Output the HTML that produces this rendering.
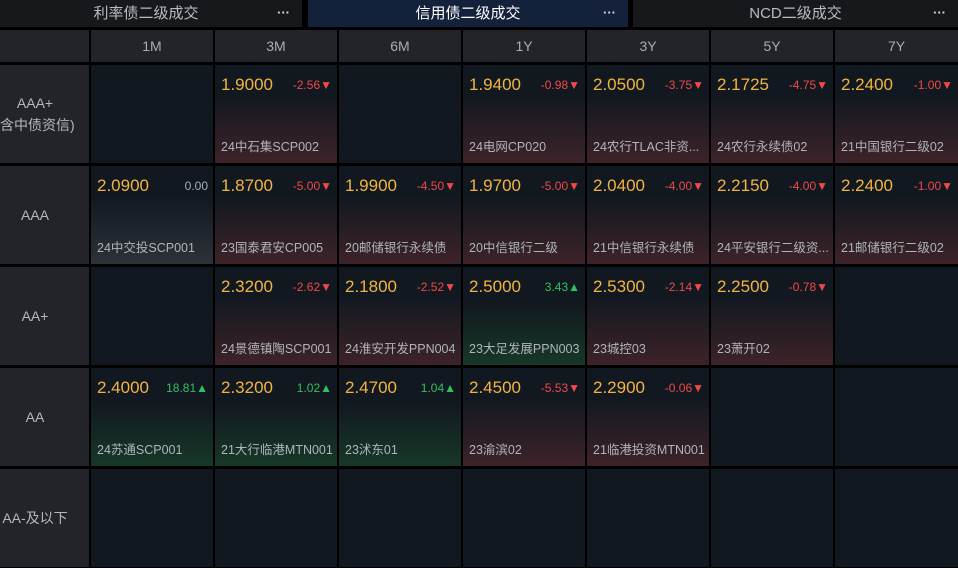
<!DOCTYPE html>
<html><head><meta charset="utf-8"><style>
*{margin:0;padding:0;box-sizing:border-box}
body{width:958px;height:568px;background:#000;overflow:hidden;font-family:"Liberation Sans","Noto Sans CJK SC",sans-serif;position:relative}
.tab{position:absolute;top:0;height:27px;background:#17181b;color:#b8bcc4;font-size:15px;line-height:27px;text-align:center}
.tab .d{position:absolute;right:12px;top:-1px;font-size:13px;letter-spacing:0;color:#ddd;font-weight:bold}
.grid{position:absolute;top:30px;left:0;width:958px;display:grid;grid-template-columns:89px repeat(6,122px) 1fr;grid-template-rows:32px repeat(5,98px);column-gap:2px;row-gap:3px}
.h{background:#232429;color:#a8acb4;font-size:14px;display:flex;align-items:center;justify-content:center}
.l{background:#232429;color:#b4b8c0;font-size:14px;position:relative;overflow:hidden}
.l span{position:absolute;left:-15px;width:100px;top:50%;transform:translateY(-50%);text-align:center;line-height:22px;white-space:nowrap}
.c{background:#121820;position:relative}
.r{background:linear-gradient(#121820 30%,#3d2329)}
.g{background:linear-gradient(#121820 35%,#173828)}
.n{background:linear-gradient(#121820 30%,#2c3238)}
.p{position:absolute;left:6px;top:10px;font-size:17px;color:#f2b441}
.v{position:absolute;right:5px;top:13px;font-size:12px}
.r .v{color:#f04848}.g .v{color:#2fc15e}.n .v{color:#a8acb4}
.nm{position:absolute;left:6px;top:71px;font-size:12.5px;color:#b0b4bc;white-space:nowrap;overflow:hidden;width:116px}
</style></head><body>
<div class="tab" style="left:-10px;width:312px"><span style="position:absolute;left:6px;color:#ccc">)</span>利率债二级成交<span class="d">···</span></div>
<div class="tab" style="left:308px;width:320px;background:#13213a;color:#fff">信用债二级成交<span class="d">···</span></div>
<div class="tab" style="left:633px;width:325px">NCD二级成交<span class="d">···</span></div>
<div class="grid">
<div class="h"></div><div class="h">1M</div><div class="h">3M</div><div class="h">6M</div><div class="h">1Y</div><div class="h">3Y</div><div class="h">5Y</div><div class="h">7Y</div>

<div class="l"><span>AAA+<br>(含中债资信)</span></div>
<div class="c"></div>
<div class="c r"><span class="p">1.9000</span><span class="v">-2.56▼</span><span class="nm">24中石集SCP002</span></div>
<div class="c"></div>
<div class="c r"><span class="p">1.9400</span><span class="v">-0.98▼</span><span class="nm">24电网CP020</span></div>
<div class="c r"><span class="p">2.0500</span><span class="v">-3.75▼</span><span class="nm">24农行TLAC非资...</span></div>
<div class="c r"><span class="p">2.1725</span><span class="v">-4.75▼</span><span class="nm">24农行永续债02</span></div>
<div class="c r"><span class="p">2.2400</span><span class="v">-1.00▼</span><span class="nm">21中国银行二级02</span></div>

<div class="l"><span>AAA</span></div>
<div class="c n"><span class="p">2.0900</span><span class="v">0.00</span><span class="nm">24中交投SCP001</span></div>
<div class="c r"><span class="p">1.8700</span><span class="v">-5.00▼</span><span class="nm">23国泰君安CP005</span></div>
<div class="c r"><span class="p">1.9900</span><span class="v">-4.50▼</span><span class="nm">20邮储银行永续债</span></div>
<div class="c r"><span class="p">1.9700</span><span class="v">-5.00▼</span><span class="nm">20中信银行二级</span></div>
<div class="c r"><span class="p">2.0400</span><span class="v">-4.00▼</span><span class="nm">21中信银行永续债</span></div>
<div class="c r"><span class="p">2.2150</span><span class="v">-4.00▼</span><span class="nm">24平安银行二级资...</span></div>
<div class="c r"><span class="p">2.2400</span><span class="v">-1.00▼</span><span class="nm">21邮储银行二级02</span></div>

<div class="l"><span>AA+</span></div>
<div class="c"></div>
<div class="c r"><span class="p">2.3200</span><span class="v">-2.62▼</span><span class="nm">24景德镇陶SCP001</span></div>
<div class="c r"><span class="p">2.1800</span><span class="v">-2.52▼</span><span class="nm">24淮安开发PPN004</span></div>
<div class="c g"><span class="p">2.5000</span><span class="v">3.43▲</span><span class="nm">23大足发展PPN003</span></div>
<div class="c r"><span class="p">2.5300</span><span class="v">-2.14▼</span><span class="nm">23城控03</span></div>
<div class="c r"><span class="p">2.2500</span><span class="v">-0.78▼</span><span class="nm">23萧开02</span></div>
<div class="c"></div>

<div class="l"><span>AA</span></div>
<div class="c g"><span class="p">2.4000</span><span class="v">18.81▲</span><span class="nm">24苏通SCP001</span></div>
<div class="c g"><span class="p">2.3200</span><span class="v">1.02▲</span><span class="nm">21大行临港MTN001</span></div>
<div class="c g"><span class="p">2.4700</span><span class="v">1.04▲</span><span class="nm">23沭东01</span></div>
<div class="c r"><span class="p">2.4500</span><span class="v">-5.53▼</span><span class="nm">23渝滨02</span></div>
<div class="c r"><span class="p">2.2900</span><span class="v">-0.06▼</span><span class="nm">21临港投资MTN001</span></div>
<div class="c"></div>
<div class="c"></div>

<div class="l"><span>AA-及以下</span></div>
<div class="c"></div><div class="c"></div><div class="c"></div><div class="c"></div><div class="c"></div><div class="c"></div><div class="c"></div>
</div>
</body></html>
